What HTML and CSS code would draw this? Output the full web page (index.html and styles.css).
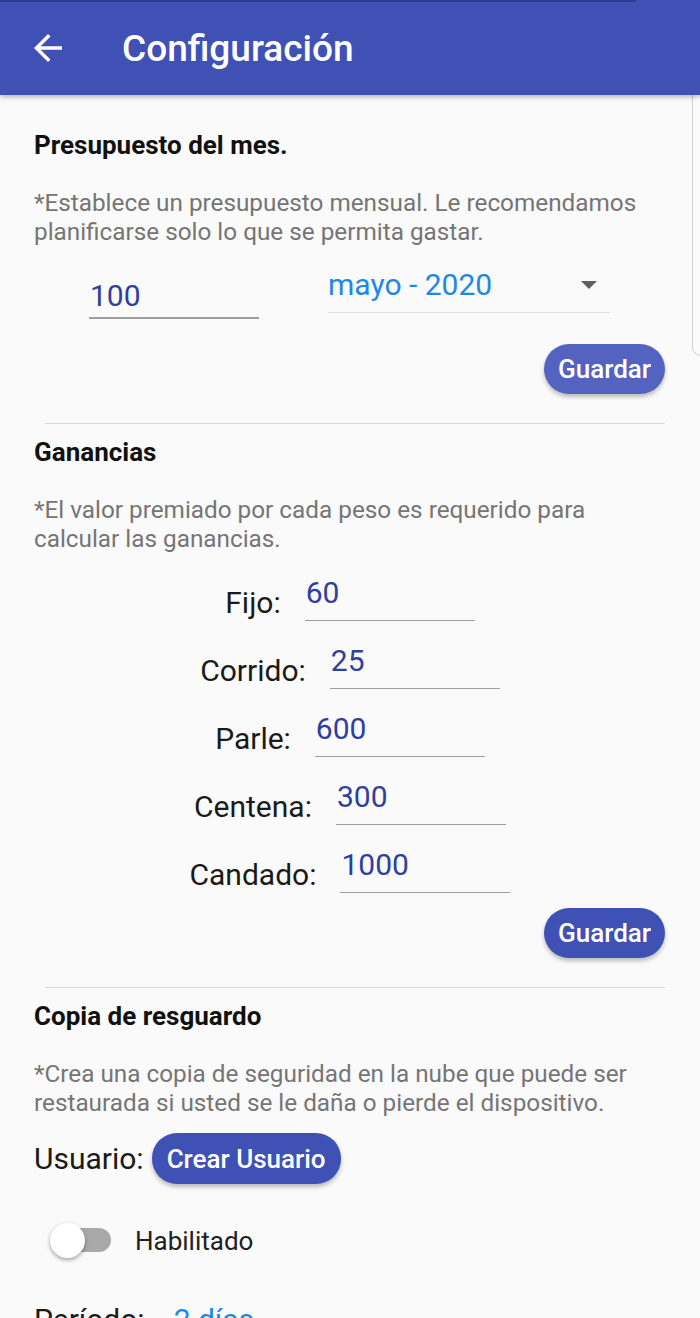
FILE: index.html
```html
<!DOCTYPE html>
<html lang="es">
  <head>
    <meta name="viewport" content="width=device-width, initial-scale=1.0">
    <meta charset="utf-8">
    <title>Configuración</title>
    <link rel="stylesheet" href="styles.css">
  </head>
  <body>
    <header class="appbar">
      <div class="statusline"></div>
      <div class="bar">
        <svg class="back" viewBox="0 0 24 24" width="42" height="42">
          <path d="M20 11H7.83l5.59-5.59L12 4l-8 8 8 8 1.41-1.41L7.83 13H20v-2z" fill="#fff"/>
        </svg>
        <h1>Configuración</h1>
      </div>
    </header>
    <div class="edge"></div>
    <main class="page">
      <section class="panel">
        <h2>Presupuesto del mes.</h2>
        <p class="hint">*Establece un presupuesto mensual. Le recomendamos planificarse solo lo que se permita gastar.</p>
        <div class="budget">
          <span class="field budget-amount">100</span>
          <span class="select">
            <span class="select-value">mayo - 2020</span>
            <span class="caret"></span>
          </span>
        </div>
        <div class="actions">
          <button class="btn btn-light">Guardar</button>
        </div>
      </section>
      <hr class="divider">
      <section class="panel">
        <h2>Ganancias</h2>
        <p class="hint">*El valor premiado por cada peso es requerido para calcular las ganancias.</p>
        <div class="prizes">
          <div class="prize-row"><span class="label">Fijo:</span><span class="field">60</span></div>
          <div class="prize-row"><span class="label">Corrido:</span><span class="field">25</span></div>
          <div class="prize-row"><span class="label">Parle:</span><span class="field">600</span></div>
          <div class="prize-row"><span class="label">Centena:</span><span class="field">300</span></div>
          <div class="prize-row"><span class="label">Candado:</span><span class="field">1000</span></div>
        </div>
        <div class="actions tight">
          <button class="btn">Guardar</button>
        </div>
      </section>
      <hr class="divider">
      <section class="panel">
        <h2>Copia de resguardo</h2>
        <p class="hint">*Crea una copia de seguridad en la nube que puede ser restaurada si usted se le daña o pierde el dispositivo.</p>
        <div class="user-row">
          <span class="label">Usuario:</span>
          <button class="btn">Crear Usuario</button>
        </div>
        <div class="switch-row">
          <span class="switch"><span class="thumb"></span></span>
          <span class="switch-label">Habilitado</span>
        </div>
        <div class="period-row">
          <span class="label">Período:</span>
          <span class="period-value">2 días</span>
        </div>
      </section>
    </main>
  </body>
</html>
```

FILE: styles.css
```css
*, *::before, *::after {
  box-sizing: border-box;
}

html, body {
  margin: 0;
  padding: 0;
  height: 100%;
  overflow: hidden;
  background: #fafafa;
  font-family: Roboto, "Noto Sans", sans-serif;
  color: #212121;
}

h1, h2, p {
  margin: 0;
}

button {
  font-family: inherit;
  border: none;
  margin: 0;
  padding: 0;
  cursor: pointer;
}

/* barra superior */
.appbar {
  position: relative;
  z-index: 2;
  height: 95px;
  background: #3f51b5;
  box-shadow: 0 2px 5px rgba(0, 0, 0, 0.28);
}

.statusline {
  width: 636px;
  height: 2px;
  background: #2e3d94;
}

.bar {
  display: flex;
  align-items: center;
  height: 93px;
  padding-left: 27px;
  gap: 53px;
}

.back {
  display: block;
  margin-top: -2px;
}

.bar h1 {
  color: #fff;
  font-size: 37px;
  font-weight: 500;
  line-height: 44px;
}

/* borde del panel lateral */
.edge {
  position: absolute;
  top: 86px;
  left: 692px;
  width: 20px;
  height: 270px;
  border: 1px solid #cfcfcf;
  border-radius: 9px;
  background: #fbfbfb;
}

.page {
  padding: 36px 35px 0 34px;
}

.panel h2 {
  font-size: 26px;
  font-weight: 700;
  line-height: 28px;
  color: #111;
}

.hint {
  margin-top: 29px;
  font-size: 24.3px;
  line-height: 29px;
  color: #757575;
}

.field {
  display: block;
  width: 170px;
  padding: 0 0 12px 1px;
  border-bottom: 1px solid #9e9e9e;
  font-size: 30px;
  line-height: 30px;
  color: #2f3f9f;
}

.budget {
  display: flex;
  align-items: flex-start;
  gap: 69px;
  margin-top: 23px;
  padding-left: 55px;
}

.budget-amount {
  margin-top: 12px;
  padding-bottom: 6px;
  border-bottom-width: 2px;
}

.select {
  display: flex;
  align-items: center;
  justify-content: space-between;
  width: 282px;
  padding: 0 13px 11px 0;
  border-bottom: 1px solid #e0e0e0;
}

.select-value {
  font-size: 30px;
  line-height: 32px;
  color: #1e88e5;
}

.caret {
  width: 0;
  height: 0;
  border-left: 8px solid transparent;
  border-right: 8px solid transparent;
  border-top: 8px solid #5f5f5f;
}

.actions {
  display: flex;
  justify-content: flex-end;
  margin-top: 25px;
}

.actions.tight {
  margin-top: 15px;
}

.btn {
  height: 50px;
  padding: 0 14px;
  border-radius: 25px;
  background: #3f51b5;
  color: #fff;
  font-size: 26px;
  font-weight: 500;
  box-shadow: 0 3px 4px rgba(0, 0, 0, 0.25);
}

.btn-light {
  background: #5563c0;
}

.divider {
  margin: 29px 0 14px 11px;
  border: none;
  border-top: 1px solid #dadada;
}

.prizes {
  display: flex;
  flex-direction: column;
  align-items: center;
  gap: 25px;
  margin-top: 25px;
  margin-left: -34px;
  margin-right: -35px;
}

.prize-row {
  display: flex;
  align-items: flex-end;
  gap: 24px;
}

.label {
  font-size: 30px;
  line-height: 30px;
  color: #1a1a1a;
}

.prize-row .label {
  margin-bottom: 3px;
}

.user-row {
  display: flex;
  align-items: center;
  gap: 8px;
  margin-top: 16px;
}

.user-row .btn {
  height: 51px;
  padding: 0 15px;
}

.switch-row {
  display: flex;
  align-items: center;
  gap: 24px;
  margin-top: 39px;
  padding-left: 16px;
}

.switch {
  position: relative;
  display: block;
  width: 61px;
  height: 35px;
}

.switch::before {
  content: "";
  position: absolute;
  left: 5px;
  right: 0;
  top: 5px;
  bottom: 6px;
  border-radius: 12px;
  background: #a9a9a9;
}

.thumb {
  position: absolute;
  left: 0;
  top: 0;
  width: 35px;
  height: 35px;
  border-radius: 50%;
  background: #fff;
  box-shadow: 0 2px 4px rgba(0, 0, 0, 0.35);
}

.switch-label {
  font-size: 26px;
  line-height: 30px;
}

.period-row {
  display: flex;
  align-items: baseline;
  gap: 29px;
  margin-top: 44px;
}

.period-value {
  font-size: 30px;
  color: #1e88e5;
}
```
